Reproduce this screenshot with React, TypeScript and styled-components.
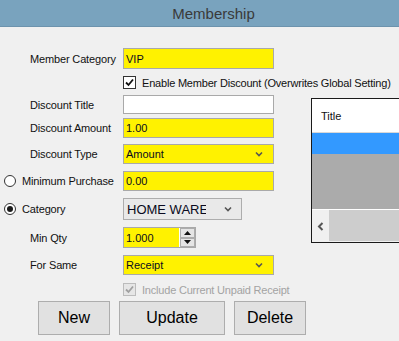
import styled, { createGlobalStyle } from 'styled-components';

const GlobalStyle = createGlobalStyle`
  body {
    margin: 0;
    background: #f0f0f0;
    overflow: hidden;
    font-family: 'Liberation Sans', Arial, sans-serif;
  }
`;

const Window = styled.div`
  width: 399px;
  height: 341px;
  overflow: hidden;
  background: #f0f0f0;
`;

const TitleBar = styled.div`
  height: 26px;
  border-bottom: 1px solid #6d93ad;
  background: #79a3be;
  display: flex;
  align-items: center;
  justify-content: center;
  padding-left: 28px;
  font-size: 15px;
  color: #3a3a3a;
`;

const Body = styled.div`
  display: flex;
  flex-direction: column;
  padding-top: 21px;
`;

const Row = styled.div<{ $h: number; $mt?: number }>`
  display: flex;
  align-items: center;
  height: ${({ $h }) => $h}px;
  margin-top: ${({ $mt = 0 }) => $mt}px;
`;

const Label = styled.div<{ $radio?: boolean }>`
  width: 123px;
  box-sizing: border-box;
  padding-left: ${({ $radio }) => ($radio ? 4 : 30)}px;
  display: flex;
  align-items: center;
  gap: 6px;
  font-size: 11px;
  letter-spacing: -0.15px;
  color: #111;
  white-space: nowrap;
`;

const Field = styled.div<{ $w?: number; $white?: boolean }>`
  width: ${({ $w = 151 }) => $w}px;
  height: 100%;
  box-sizing: border-box;
  border: 1px solid #a9a9a9;
  background: ${({ $white }) => ($white ? '#fff' : '#fff200')};
  display: flex;
  align-items: center;
  padding: 0 10px 0 2px;
  font-size: 11px;
  color: #0a0a20;
`;

const FieldText = styled.span`
  flex: 1;
`;

const Combo = styled.div`
  width: 119px;
  height: 100%;
  box-sizing: border-box;
  border: 1px solid #adadad;
  background: #e9e9e9;
  display: flex;
  align-items: center;
  padding-left: 3px;
  font-size: 13px;
  color: #0a0a20;
`;

const ComboText = styled.span`
  width: 79px;
  overflow: hidden;
  white-space: nowrap;
`;

const ComboArrow = styled.span`
  margin-left: 18px;
  display: flex;
`;

const CheckRow = styled.label<{ $disabled?: boolean }>`
  margin-left: 123px;
  display: flex;
  align-items: center;
  gap: 6px;
  font-size: 11px;
  letter-spacing: -0.2px;
  white-space: nowrap;
  color: ${({ $disabled }) => ($disabled ? '#a3a3a3' : '#111')};
`;

const Box = styled.span<{ $disabled?: boolean }>`
  width: 13px;
  height: 13px;
  box-sizing: border-box;
  border: 1px solid ${({ $disabled }) => ($disabled ? '#bcbcbc' : '#333')};
  background: ${({ $disabled }) => ($disabled ? '#e6e6e6' : '#fff')};
  display: flex;
  align-items: center;
  justify-content: center;
`;

const Radio = styled.span<{ $on?: boolean }>`
  width: 12px;
  height: 12px;
  box-sizing: border-box;
  border: 1px solid #333;
  border-radius: 50%;
  background: #fff;
  display: flex;
  align-items: center;
  justify-content: center;

  &::after {
    content: '';
    width: 6px;
    height: 6px;
    border-radius: 50%;
    background: ${({ $on }) => ($on ? '#1a1a1a' : 'transparent')};
  }
`;

const Middle = styled.div`
  display: flex;
  margin-top: 6px;
`;

const FormColumn = styled.div`
  width: 274px;
  display: flex;
  flex-direction: column;
`;

const Spin = styled.div`
  width: 73px;
  height: 100%;
  box-sizing: border-box;
  border: 1px solid #a9a9a9;
  background: #fff;
  display: flex;
`;

const SpinValue = styled.div`
  flex: 1;
  background: #fff200;
  display: flex;
  align-items: center;
  padding-left: 2px;
  font-size: 11px;
  color: #0a0a20;
  margin-right: 1px;
`;

const SpinButtons = styled.div`
  width: 15px;
  display: flex;
  flex-direction: column;
`;

const SpinButton = styled.div`
  flex: 1;
  box-sizing: border-box;
  border: 1px solid #adadad;
  background: #e5e5e5;
  display: flex;
  align-items: center;
  justify-content: center;
`;

const GridPanel = styled.div`
  margin: 3px 0 0 37px;
  width: 110px;
  height: 145px;
  box-sizing: border-box;
  border: 1px solid #1a1a1a;
  display: flex;
  flex-direction: column;
  flex-shrink: 0;
`;

const GridHeader = styled.div`
  height: 33px;
  background: #fff;
  border-bottom: 1px solid #d8d8d8;
  display: flex;
  align-items: center;
  padding-left: 9px;
  font-size: 11px;
  color: #111;
`;

const SelectedRow = styled.div`
  height: 21px;
  background: #3399ff;
`;

const EmptyArea = styled.div`
  flex: 1;
  background: #ababab;
`;

const ScrollBar = styled.div`
  height: 32px;
  border-top: 1px solid #fff;
  background: #f0f0f0;
  display: flex;
`;

const ScrollArrow = styled.div`
  width: 17px;
  display: flex;
  align-items: center;
  justify-content: center;
`;

const ScrollThumb = styled.div`
  flex: 1;
  margin: 0 0 1px;
  background: #cdcdcd;
`;

const Buttons = styled.div`
  display: flex;
  gap: 9px;
  padding-left: 38px;
  margin-top: 5px;
`;

const Button = styled.button<{ $w: number }>`
  width: ${({ $w }) => $w}px;
  height: 34px;
  border: 1px solid #adadad;
  background: #e1e1e1;
  font-family: 'Liberation Sans', Arial, sans-serif;
  font-size: 16px;
  color: #000;
  padding: 0;
`;

function Chevron() {
  return (
    <svg width="8" height="6" viewBox="0 0 8 6">
      <path d="M1 1.5 L4 4.5 L7 1.5" fill="none" stroke="#555" strokeWidth="1.6" />
    </svg>
  );
}

function Check({ color }: { color: string }) {
  return (
    <svg width="9" height="9" viewBox="0 0 9 9">
      <path d="M1 4.5 L3.5 7 L8 1.5" fill="none" stroke={color} strokeWidth="1.8" />
    </svg>
  );
}

function Triangle({ up }: { up?: boolean }) {
  return (
    <svg width="7" height="4" viewBox="0 0 7 4">
      <path d={up ? 'M0 4 L3.5 0 L7 4 Z' : 'M0 0 L3.5 4 L7 0 Z'} fill="#111" />
    </svg>
  );
}

export default function App() {
  return (
    <Window>
      <GlobalStyle />
      <TitleBar>Membership</TitleBar>
      <Body>
        <Row $h={21}>
          <Label>Member Category</Label>
          <Field>VIP</Field>
        </Row>
        <Row $h={13} $mt={7}>
          <CheckRow>
            <Box>
              <Check color="#111" />
            </Box>
            Enable Member Discount (Overwrites Global Setting)
          </CheckRow>
        </Row>
        <Middle>
          <FormColumn>
            <Row $h={19}>
              <Label>Discount Title</Label>
              <Field $white />
            </Row>
            <Row $h={20} $mt={4}>
              <Label>Discount Amount</Label>
              <Field>1.00</Field>
            </Row>
            <Row $h={20} $mt={6}>
              <Label>Discount Type</Label>
              <Field>
                <FieldText>Amount</FieldText>
                <Chevron />
              </Field>
            </Row>
            <Row $h={20} $mt={7}>
              <Label $radio>
                <Radio />
                Minimum Purchase
              </Label>
              <Field>0.00</Field>
            </Row>
            <Row $h={22} $mt={7}>
              <Label $radio>
                <Radio $on />
                Category
              </Label>
              <Combo>
                <ComboText>HOME WARE</ComboText>
                <ComboArrow>
                  <Chevron />
                </ComboArrow>
              </Combo>
            </Row>
            <Row $h={21} $mt={7}>
              <Label>Min Qty</Label>
              <Spin>
                <SpinValue>1.000</SpinValue>
                <SpinButtons>
                  <SpinButton>
                    <Triangle up />
                  </SpinButton>
                  <SpinButton>
                    <Triangle />
                  </SpinButton>
                </SpinButtons>
              </Spin>
            </Row>
          </FormColumn>
          <GridPanel>
            <GridHeader>Title</GridHeader>
            <SelectedRow />
            <EmptyArea />
            <ScrollBar>
              <ScrollArrow>
                <svg width="7" height="9" viewBox="0 0 7 9">
                  <path d="M5.5 1 L2 4.5 L5.5 8" fill="none" stroke="#555" strokeWidth="2" />
                </svg>
              </ScrollArrow>
              <ScrollThumb />
            </ScrollBar>
          </GridPanel>
        </Middle>
        <Row $h={20} $mt={7}>
          <Label>For Same</Label>
          <Field>
            <FieldText>Receipt</FieldText>
            <Chevron />
          </Field>
        </Row>
        <Row $h={13} $mt={8}>
          <CheckRow $disabled>
            <Box $disabled>
              <Check color="#a0a0a0" />
            </Box>
            Include Current Unpaid Receipt
          </CheckRow>
        </Row>
        <Buttons>
          <Button $w={72}>New</Button>
          <Button $w={106}>Update</Button>
          <Button $w={72}>Delete</Button>
        </Buttons>
      </Body>
    </Window>
  );
}
